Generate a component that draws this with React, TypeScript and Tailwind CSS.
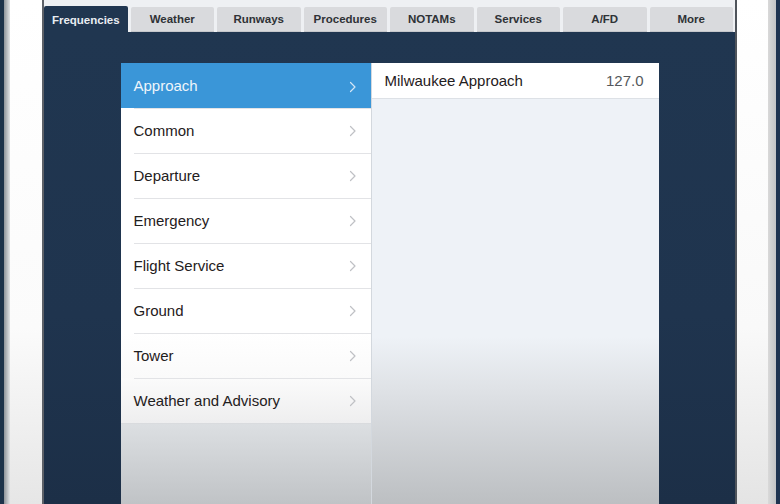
import React from "react";

const tabs = ["Frequencies", "Weather", "Runways", "Procedures", "NOTAMs", "Services", "A/FD", "More"];
const items = ["Approach", "Common", "Departure", "Emergency", "Flight Service", "Ground", "Tower", "Weather and Advisory"];

function Chevron({ active }: { active?: boolean }) {
  return (
    <svg width="8" height="12" viewBox="0 0 8 12" className="shrink-0">
      <polyline
        points="1.5,1.5 6,6 1.5,10.5"
        fill="none"
        stroke={active ? "#d3e6f6" : "#bfc1c5"}
        strokeWidth="1.2"
        strokeLinecap="round"
        strokeLinejoin="round"
      />
    </svg>
  );
}

export default function App() {
  return (
    <div
      className="flex w-[780px] h-[504px] overflow-hidden bg-white"
      style={{ fontFamily: '"Liberation Sans", Arial, Helvetica, sans-serif' }}
    >
      {/* left bezel */}
      <div className="flex h-full w-[44px] shrink-0">
        <div className="w-[4px] h-full bg-[#1d324a]" />
        <div className="w-[6px] h-full bg-[linear-gradient(to_right,#8e9399,#e2e3e5)]" />
        <div className="w-[32px] h-full bg-[linear-gradient(to_bottom,#ffffff_0%,#fbfbfb_65%,#e6e6e6_100%)]" />
        <div className="w-[2px] h-full bg-[#5d6168]" />
      </div>

      {/* main app */}
      <div className="flex flex-col w-[691px] h-full shrink-0">
        <div className="h-[6px] bg-[#eef0f3]" />
        <div className="flex h-[26px] gap-[3px] pr-[2px] bg-[#eef0f3]">
          {tabs.map((t, i) => (
            <div
              key={t}
              className={
                i === 0
                  ? "flex-1 flex items-center justify-center pt-[3px] bg-[#203650] text-[#e9edf2] text-[11.5px] font-bold rounded-t-[2px]"
                  : "flex-1 flex items-center justify-center pt-[2px] bg-[#d9dadd] text-[#2f3236] text-[11.5px] font-bold mt-[1px] rounded-t-[2px] border-b border-[#c5c7cb]"
              }
            >
              {t}
            </div>
          ))}
        </div>
        <div className="flex-1 flex justify-center pt-[31px] bg-[linear-gradient(to_bottom,#203650_0%,#1f344e_60%,#1c2f47_100%)]">
          {/* list */}
          <div className="flex flex-col w-[250px] h-full">
            {items.map((it, i) =>
              i === 0 ? (
                <div key={it} className="flex items-center justify-between h-[45px] pl-[13px] pr-[14px] pt-[2px] bg-[#3a96d8] text-[#eef5fb] text-[15px]">
                  <span>{it}</span>
                  <Chevron active />
                </div>
              ) : (
                <div
                  key={it}
                  className={
                    i === items.length - 1
                      ? "h-[45px] pl-[13px] bg-[linear-gradient(to_bottom,#fbfbfb,#eeeeef)]"
                      : i === items.length - 2
                      ? "h-[45px] pl-[13px] bg-[linear-gradient(to_bottom,#ffffff,#fafafa)]"
                      : "h-[45px] pl-[13px] bg-white"
                  }
                >
                  <div className="flex items-center justify-between h-full pr-[14px] border-t border-[#e2e3e6] text-[#1f2021] text-[15px]">
                    <span>{it}</span>
                    <Chevron />
                  </div>
                </div>
              )
            )}
            <div className="flex-1 border-t border-[#d9dbde] bg-[linear-gradient(to_bottom,#dcdfe2,#c0c3c6)]" />
          </div>
          {/* detail */}
          <div className="flex flex-col w-[288px] h-full border-l border-[#d3d8de] bg-[linear-gradient(to_bottom,#eef2f7_0%,#eef2f7_62%,#dfe2e6_74%,#bcbfc2_100%)]">
            <div className="flex items-center justify-between h-[36px] pl-[13px] pr-[15px] pt-[2px] bg-white border-b border-[#dde1e6] text-[15px]">
              <span className="text-[#1f2021]">Milwaukee Approach</span>
              <span className="text-[#55585c]">127.0</span>
            </div>
          </div>
        </div>
      </div>

      {/* right bezel */}
      <div className="flex h-full flex-1">
        <div className="w-[2px] h-full bg-[#4f545b]" />
        <div className="w-[31px] h-full bg-[linear-gradient(to_bottom,#ffffff_0%,#f9f9f9_65%,#e4e4e4_100%)]" />
        <div className="w-[8px] h-full bg-[linear-gradient(to_right,#d9d9d9,#c2c3c5)]" />
        <div className="flex-1 h-full bg-[#1e3350]" />
      </div>
    </div>
  );
}
